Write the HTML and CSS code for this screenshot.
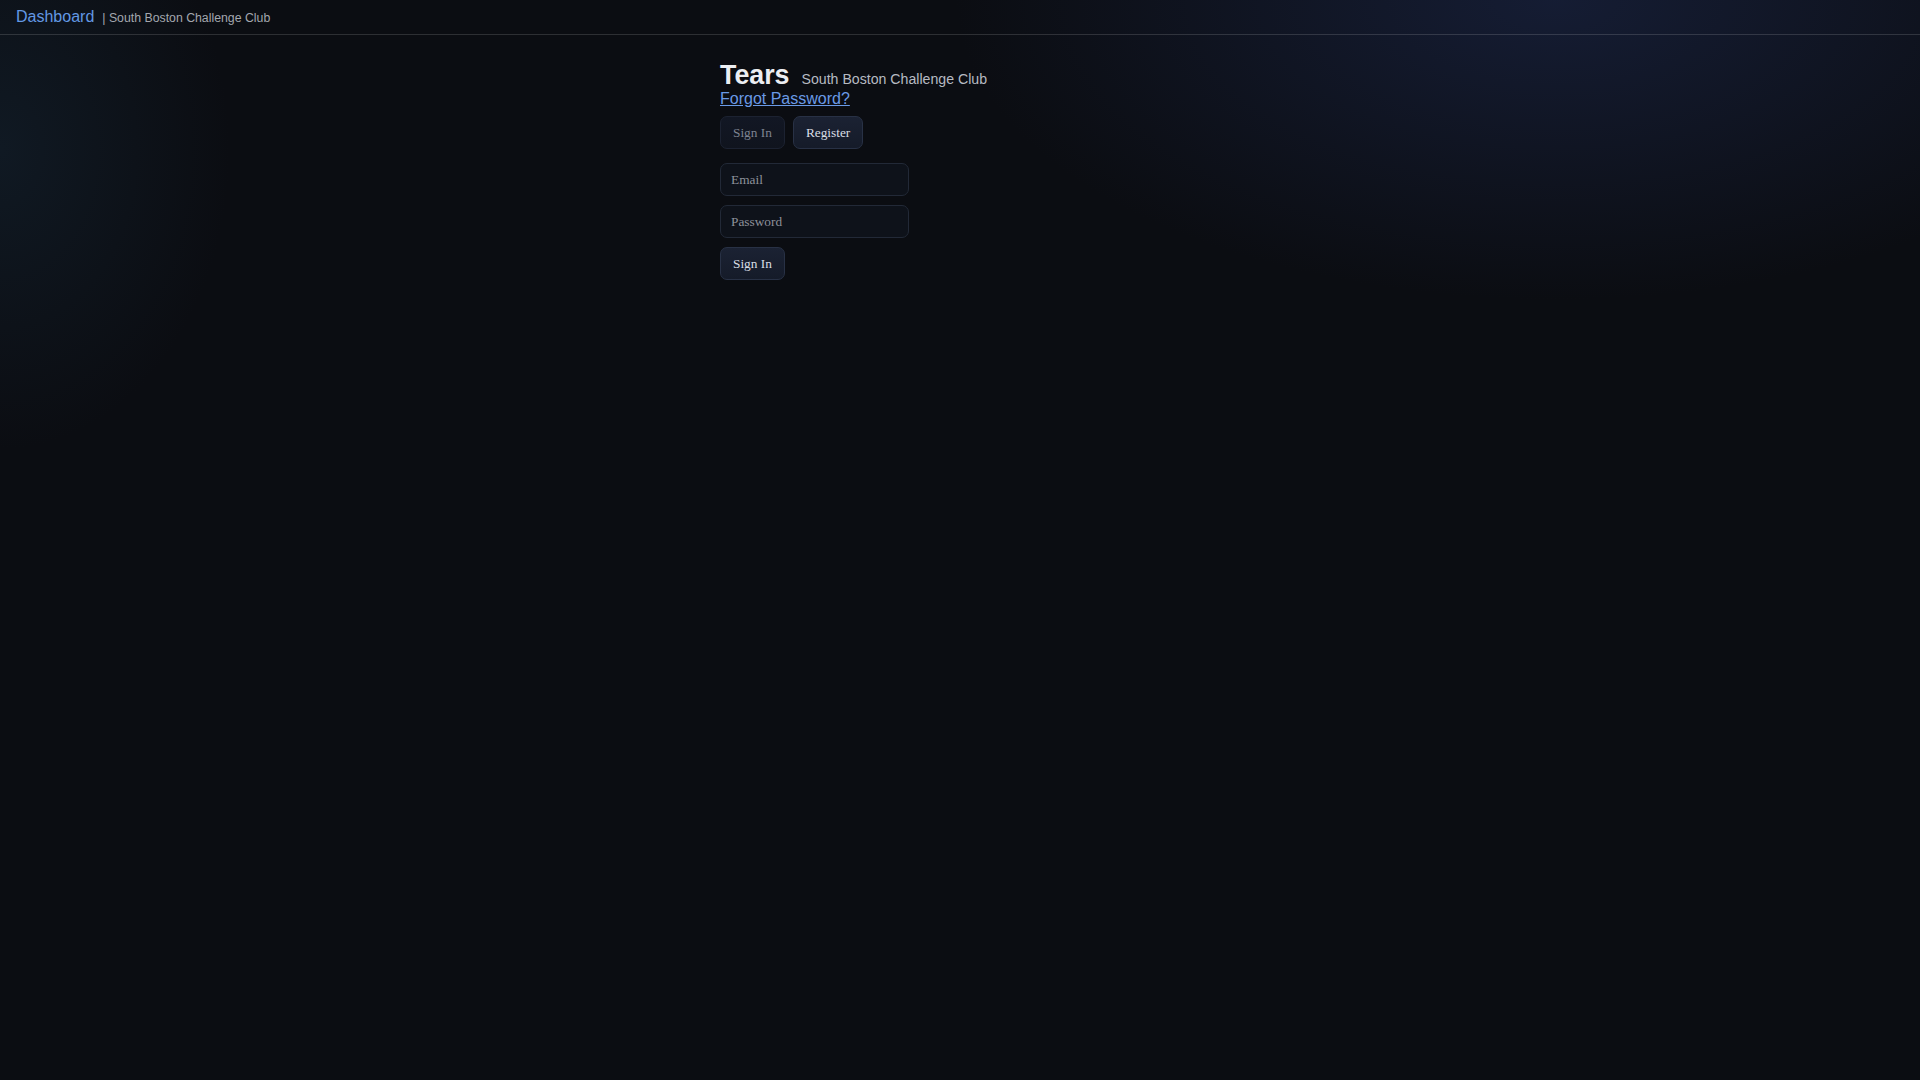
FILE: index.html
```html
<!DOCTYPE html>
<html lang="en">
<head>
<meta charset="utf-8">
<title>Tears — Sign In</title>
<link rel="stylesheet" href="styles.css">
</head>
<body>
<header class="topbar">
  <a class="brand" href="#">Dashboard</a>
  <span class="club">| South Boston Challenge Club</span>
</header>
<main class="auth">
  <div class="title-row">
    <h1 class="title">Tears</h1>
    <span class="subtitle">South Boston Challenge Club</span>
  </div>
  <a class="forgot" href="#">Forgot Password?</a>
  <div class="tabs">
    <button class="btn btn-muted" type="button">Sign In</button>
    <button class="btn" type="button">Register</button>
  </div>
  <form class="form">
    <input class="field" type="email" placeholder="Email">
    <input class="field" type="password" placeholder="Password">
    <div><button class="btn" type="submit">Sign In</button></div>
  </form>
</main>
</body>
</html>
```
FILE: styles.css
```css
html {
  background-color: #0b0d12;
  background-image:
    radial-gradient(ellipse 600px 300px at 81% 0%, rgba(27, 38, 72, 0.62), rgba(11, 13, 18, 0) 100%),
    radial-gradient(ellipse 230px 300px at 0% 150px, rgba(22, 40, 56, 0.45), rgba(11, 13, 18, 0) 100%);
  background-repeat: no-repeat;
  min-height: 100%;
}

body {
  margin: 0;
  min-height: 100vh;
  font-family: "Liberation Sans", Arial, sans-serif;
  color: #e6e8ec;
}

.topbar {
  display: flex;
  align-items: baseline;
  padding: 8px 16px;
  border-bottom: 1px solid rgba(255, 255, 255, 0.14);
}

.brand {
  font-size: 16px;
  color: #6298e4;
  text-decoration: none;
}

.club {
  margin-left: 8px;
  font-size: 12.3px;
  color: #a3a7ae;
}

.auth {
  max-width: 480px;
  margin: 0 auto;
  padding-top: 25px;
}

.title-row {
  display: flex;
  align-items: baseline;
  gap: 12px;
}

.title {
  margin: 0;
  font-size: 26.8px;
  line-height: 30px;
  font-weight: 700;
  color: #eceef2;
}

.subtitle {
  font-size: 14.15px;
  color: #b6bac2;
}

.forgot {
  display: inline-block;
  font-size: 16px;
  color: #6a9ae6;
  text-decoration: underline;
}

.tabs {
  display: flex;
  gap: 8px;
  margin-top: 8px;
  margin-bottom: 14px;
}

.btn {
  box-sizing: border-box;
  height: 33px;
  font-family: "Liberation Serif", "Times New Roman", serif;
  font-size: 13.333px;
  font-weight: 400;
  line-height: 15px;
  padding: 0 12px;
  border-radius: 7px;
  border: 1px solid #283145;
  background: linear-gradient(180deg, #1b2233 0%, #151b29 100%);
  color: #d9dde5;
  cursor: pointer;
}

.btn-muted {
  border-color: #1c2231;
  background: linear-gradient(180deg, #121724 0%, #10141e 100%);
  color: #7e8391;
}

.form {
  display: flex;
  flex-direction: column;
  align-items: flex-start;
  gap: 9px;
  margin: 0;
}

.form > div {
  display: flex;
}

.field {
  box-sizing: border-box;
  width: 189px;
  height: 33px;
  font-family: "Liberation Serif", "Times New Roman", serif;
  font-size: 13.333px;
  line-height: 15px;
  padding: 0 10px;
  border: 1px solid #222937;
  border-radius: 7px;
  background: #0e121a;
  color: #e4e7ee;
  outline: none;
}

.field::placeholder {
  color: #8d919a;
}
```
